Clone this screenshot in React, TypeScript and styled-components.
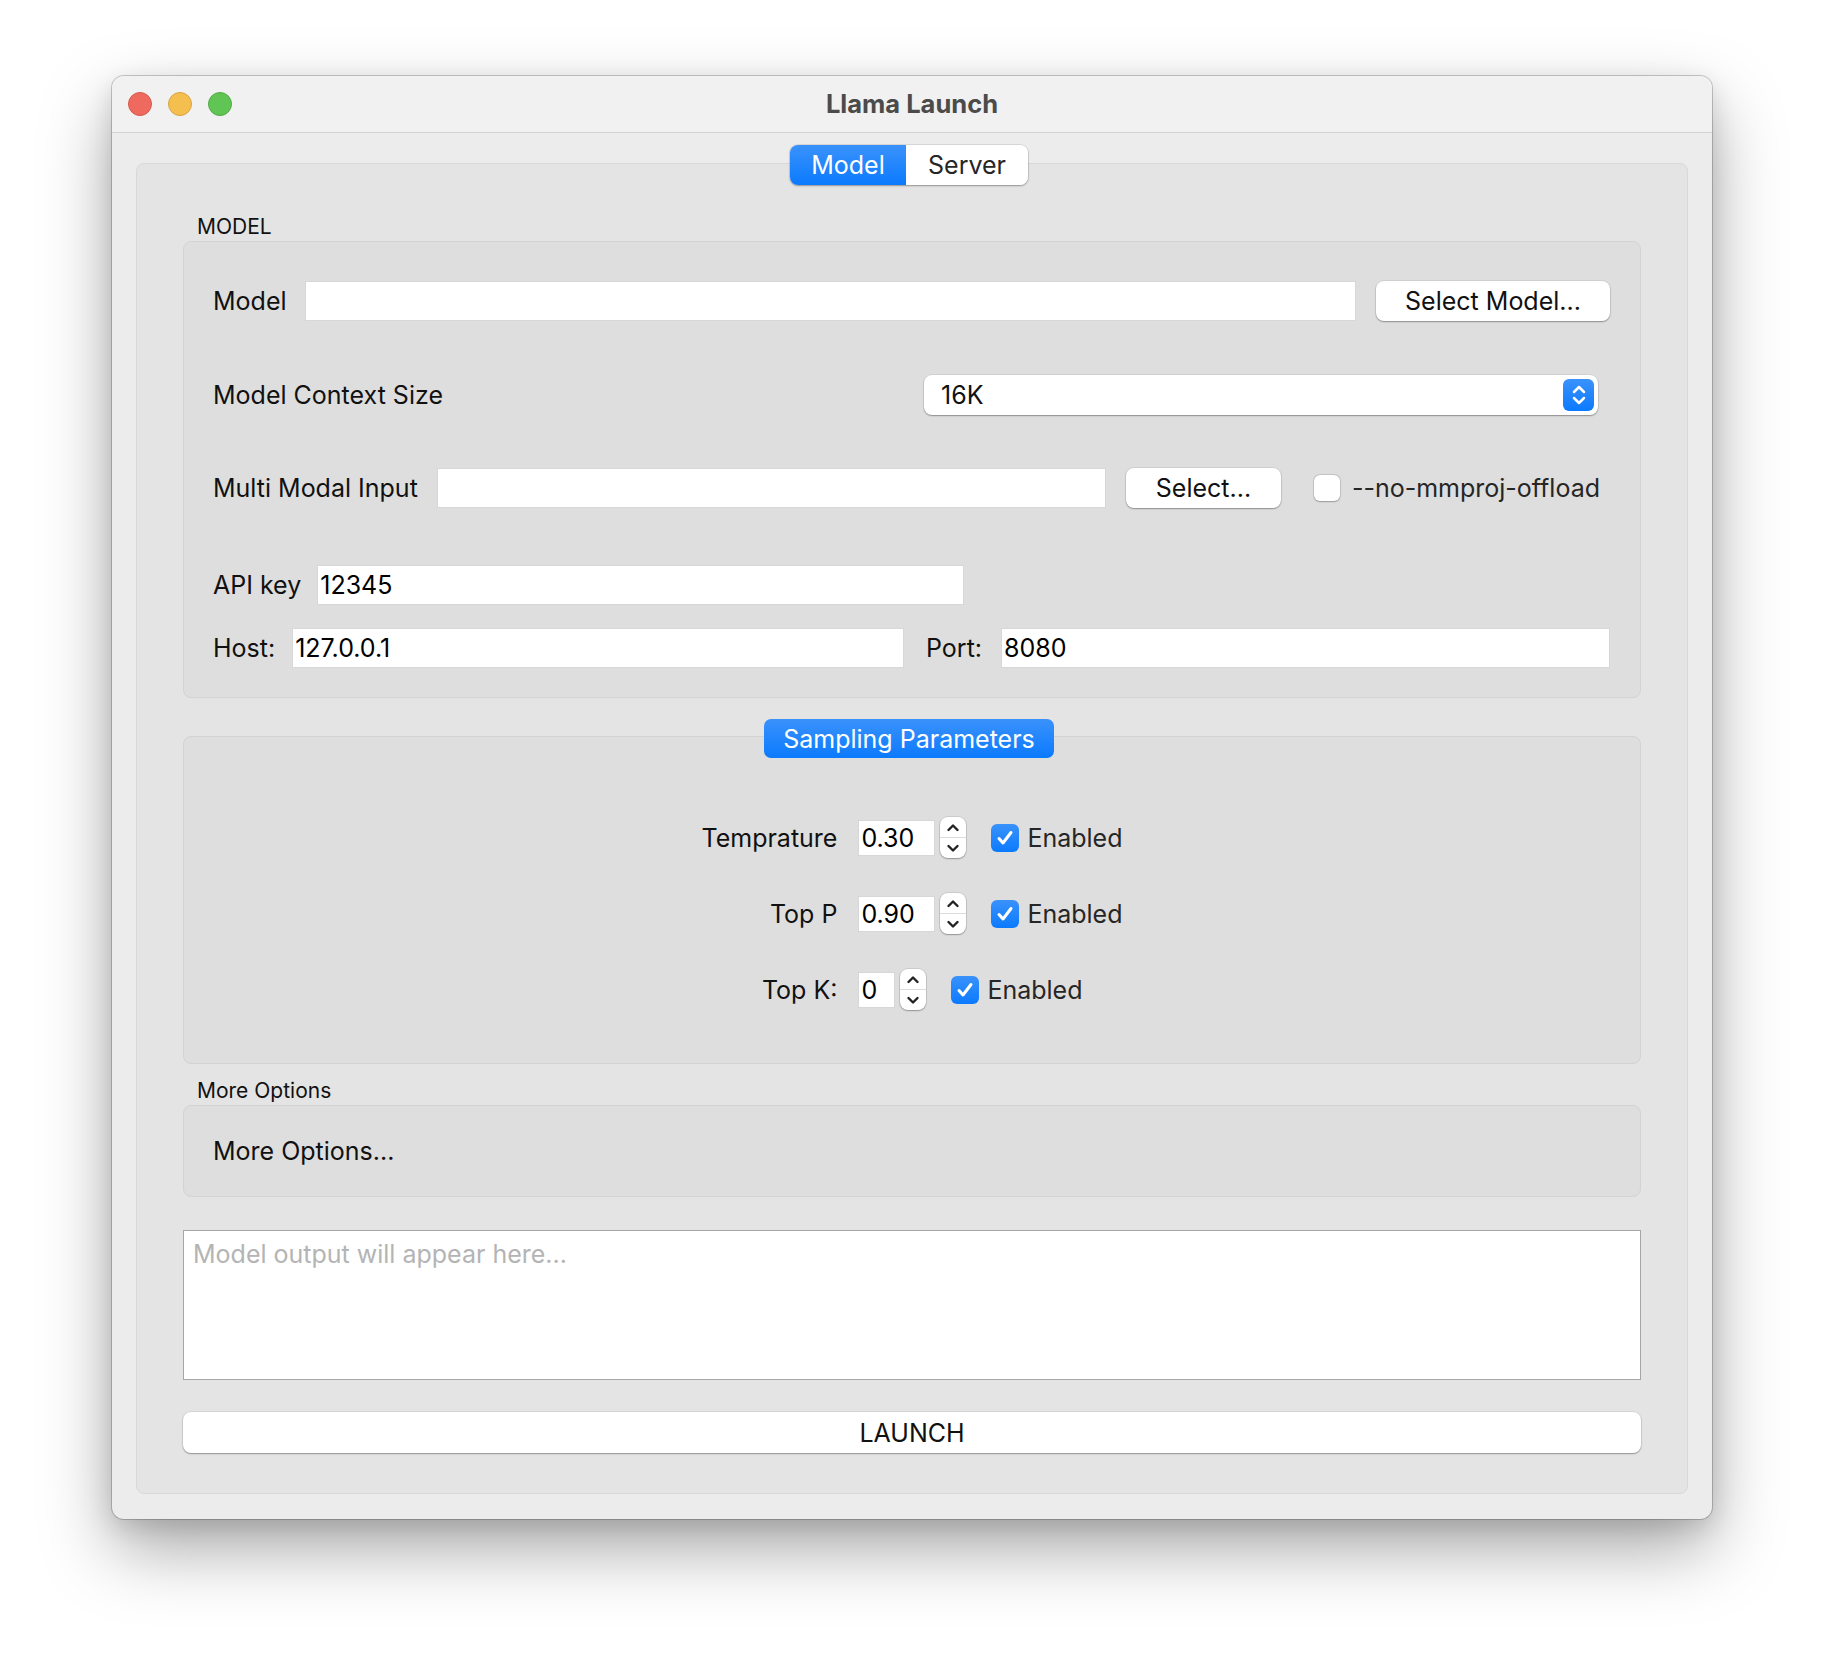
import * as React from "react";
import styled, { createGlobalStyle, css } from "styled-components";

const GlobalStyle = createGlobalStyle`
  html, body {
    margin: 0;
    padding: 0;
    background: #ffffff;
  }
  body {
    font-family: Inter, "Liberation Sans", sans-serif;
    color: #111;
    -webkit-font-smoothing: antialiased;
  }
  * {
    box-sizing: border-box;
  }
`;

const FONT = "25px";

const Page = styled.div`
  width: 1824px;
  height: 1668px;
  padding: 76px 0 0 112px;
`;

const Window = styled.div`
  width: 1600px;
  height: 1443px;
  display: flex;
  flex-direction: column;
  background: #ececec;
  border-radius: 12px;
  overflow: hidden;
  box-shadow: 0 0 0 1px rgba(0, 0, 0, 0.2), 0 30px 70px rgba(0, 0, 0, 0.34),
    0 8px 24px rgba(0, 0, 0, 0.12);
`;

const TitleBar = styled.div`
  height: 57px;
  flex-shrink: 0;
  display: grid;
  grid-template-columns: 1fr auto 1fr;
  align-items: center;
  padding: 0 16px;
  background: #f1f1f1;
  border-bottom: 1px solid #d2d2d2;
`;

const Lights = styled.div`
  display: flex;
  gap: 16px;
`;

const Light = styled.span<{ $fill: string; $edge: string }>`
  width: 24px;
  height: 24px;
  border-radius: 50%;
  background: ${(p) => p.$fill};
  border: 1px solid ${(p) => p.$edge};
`;

const Title = styled.div`
  font-size: 25.5px;
  font-weight: 700;
  color: #4b4b4b;
  margin-top: -2px;
`;

const Body = styled.div`
  flex: 1;
  display: flex;
  flex-direction: column;
  padding: 12px 24px 25px;
`;

const Segmented = styled.div`
  align-self: center;
  margin-right: 6px;
  display: flex;
  height: 40px;
  border-radius: 8px;
  overflow: hidden;
  position: relative;
  z-index: 1;
  box-shadow: 0 0 0 1px rgba(0, 0, 0, 0.08), 0 1px 2px rgba(0, 0, 0, 0.3);
`;

const Segment = styled.div<{ $active?: boolean; $w: number }>`
  width: ${(p) => p.$w}px;
  display: flex;
  align-items: center;
  justify-content: center;
  font-size: ${FONT};
  ${(p) =>
    p.$active
      ? css`
          background: linear-gradient(#3a92fb, #0b7afe);
          color: #fff;
        `
      : css`
          background: #fff;
          color: #262626;
        `}
`;

const Pane = styled.div`
  flex: 1;
  margin-top: -22px;
  display: flex;
  flex-direction: column;
  padding: 50px 46px 0;
  background: #e4e4e4;
  border: 1px solid #d8d8d8;
  border-radius: 8px;
`;

const SectionLabel = styled.div<{ $mt?: number }>`
  font-size: 21px;
  line-height: 26px;
  height: 26px;
  margin-top: ${(p) => p.$mt ?? 0}px;
  margin-left: 14px;
  color: #111;
`;

const Group = styled.div`
  margin-top: 1px;
  background: #dedede;
  border: 1px solid #d3d3d3;
  border-radius: 8px;
`;

const ModelGroup = styled(Group)`
  padding: 39px 30px 30px 29px;
`;

const Row = styled.div<{ $space?: number }>`
  display: flex;
  align-items: center;
  height: 40px;
  margin-top: ${(p) => p.$space ?? 0}px;
`;

const Label = styled.span<{ $gap?: number; $grow?: boolean }>`
  font-size: ${FONT};
  color: #111;
  white-space: nowrap;
  margin-right: ${(p) => p.$gap ?? 0}px;
  ${(p) => p.$grow && "flex: 1;"}
`;

const TextInput = styled.input<{ $w?: number }>`
  height: 40px;
  ${(p) => (p.$w ? `width: ${p.$w}px;` : "flex: 1; min-width: 0;")}
  border: none;
  background: #fff;
  box-shadow: inset 0 0 0 1px #d7d7d7, inset 0 -1px 0 #a9a9a9;
  font-family: inherit;
  font-size: ${FONT};
  color: #000;
  padding: 0 3px;
  outline: none;
`;

const Button = styled.div<{ $w: number; $ml?: number }>`
  width: ${(p) => p.$w}px;
  height: 40px;
  margin-left: ${(p) => p.$ml ?? 0}px;
  display: flex;
  align-items: center;
  justify-content: center;
  background: #fff;
  border-radius: 8px;
  box-shadow: 0 0 0 1px rgba(0, 0, 0, 0.06), 0 1px 1.5px rgba(0, 0, 0, 0.32);
  font-size: ${FONT};
  color: #111;
`;

const Combo = styled.div`
  width: 674px;
  height: 40px;
  margin-right: 12px;
  display: flex;
  align-items: center;
  justify-content: space-between;
  padding: 0 4px 0 17px;
  background: #fff;
  border-radius: 8px;
  box-shadow: 0 0 0 1px rgba(0, 0, 0, 0.06), 0 1px 1.5px rgba(0, 0, 0, 0.32);
  font-size: ${FONT};
  color: #111;
`;

const ComboArrows = styled.div`
  width: 31px;
  height: 32px;
  border-radius: 6px;
  background: linear-gradient(#3a92fb, #0b7afe);
  display: flex;
  align-items: center;
  justify-content: center;
`;

const Check = styled.div<{ $on?: boolean; $ml?: number }>`
  width: 28px;
  height: 28px;
  flex-shrink: 0;
  margin-left: ${(p) => p.$ml ?? 0}px;
  border-radius: 6px;
  display: flex;
  align-items: center;
  justify-content: center;
  ${(p) =>
    p.$on
      ? css`
          background: linear-gradient(#3a92fb, #0b7afe);
        `
      : css`
          width: 26px;
          height: 26px;
          background: #fff;
          box-shadow: 0 0 0 1px rgba(0, 0, 0, 0.08), 0 0.5px 1.5px rgba(0, 0, 0, 0.25);
        `}
`;

const CheckText = styled.span<{ $ml: number; $mr?: number }>`
  margin-left: ${(p) => p.$ml}px;
  margin-right: ${(p) => p.$mr ?? 0}px;
  font-size: ${FONT};
  color: #262626;
  white-space: nowrap;
`;

const HostRow = styled.div`
  display: grid;
  grid-template-columns: 691fr 684fr;
  column-gap: 22px;
  height: 39px;
  margin-top: 23px;
`;

const Pair = styled.div`
  display: flex;
  align-items: center;
`;

const SamplingWrap = styled.div`
  margin-top: 21px;
  display: flex;
  flex-direction: column;
`;

const Pill = styled.div`
  align-self: center;
  margin-right: 6px;
  position: relative;
  z-index: 1;
  width: 290px;
  height: 39px;
  border-radius: 7px;
  background: linear-gradient(#3a92fb, #0b7afe);
  color: #fff;
  font-size: ${FONT};
  display: flex;
  align-items: center;
  justify-content: center;
`;

const SamplingGroup = styled(Group)`
  margin-top: -22px;
  padding: 80px 0 53px;
`;

const ParamGrid = styled.div`
  display: grid;
  grid-template-columns: auto auto;
  column-gap: 21px;
  row-gap: 35px;
  justify-content: center;
  align-items: center;
`;

const ParamLabel = styled.span`
  justify-self: end;
  font-size: ${FONT};
  color: #111;
`;

const Field = styled.div`
  display: flex;
  align-items: center;
  height: 41px;
`;

const SpinInput = styled.input<{ $w: number }>`
  width: ${(p) => p.$w}px;
  height: 36px;
  border: none;
  background: #fff;
  box-shadow: inset 0 0 0 1px #d7d7d7, inset 0 -1px 0 #a9a9a9;
  font-family: inherit;
  font-size: ${FONT};
  color: #000;
  padding: 0 3px;
  outline: none;
`;

const Stepper = styled.div`
  width: 26px;
  height: 41px;
  margin-left: 5px;
  display: flex;
  flex-direction: column;
  background: #fff;
  border-radius: 8px;
  box-shadow: 0 0 0 1px rgba(0, 0, 0, 0.08), 0 1px 1.5px rgba(0, 0, 0, 0.28);
`;

const StepHalf = styled.div<{ $bottom?: boolean }>`
  flex: 1;
  display: flex;
  align-items: center;
  justify-content: center;
  ${(p) => p.$bottom && "border-top: 1px solid #dcdcdc;"}
`;

const MoreGroup = styled(Group)`
  height: 92px;
  display: flex;
  align-items: center;
  padding: 0 30px 0 29px;
`;

const Output = styled.textarea`
  margin-top: 33px;
  height: 150px;
  resize: none;
  border: 1px solid #a6a6a6;
  background: #fff;
  padding: 8px 9px;
  font-family: inherit;
  font-size: ${FONT};
  outline: none;
  &::placeholder {
    color: #b4b4b4;
  }
`;

const Launch = styled.div`
  margin-top: 32px;
  height: 41px;
  display: flex;
  align-items: center;
  justify-content: center;
  background: #fff;
  border-radius: 8px;
  box-shadow: 0 0 0 1px rgba(0, 0, 0, 0.06), 0 1px 1.5px rgba(0, 0, 0, 0.32);
  font-size: ${FONT};
  color: #111;
`;

const Chevron: React.FC<{ up?: boolean; color: string }> = ({ up, color }) => (
  <svg width="14" height="9" viewBox="0 0 14 9">
    <polyline
      points={up ? "2.5,7 7,2.5 11.5,7" : "2.5,2 7,6.5 11.5,2"}
      fill="none"
      stroke={color}
      strokeWidth={2.4}
      strokeLinecap="round"
      strokeLinejoin="round"
    />
  </svg>
);

const CheckMark = () => (
  <svg width="20" height="20" viewBox="0 0 20 20">
    <polyline
      points="4,10.5 8,15 16,4.5"
      fill="none"
      stroke="#fff"
      strokeWidth={3}
      strokeLinecap="round"
      strokeLinejoin="round"
    />
  </svg>
);

const Spin: React.FC<{ value: string; w: number }> = ({ value, w }) => (
  <>
    <SpinInput $w={w} defaultValue={value} />
    <Stepper>
      <StepHalf>
        <Chevron up color="#222" />
      </StepHalf>
      <StepHalf $bottom>
        <Chevron color="#222" />
      </StepHalf>
    </Stepper>
  </>
);

const params = [
  { label: "Temprature", value: "0.30", w: 77 },
  { label: "Top P", value: "0.90", w: 77 },
  { label: "Top K:", value: "0", w: 37 },
];

const App: React.FC = () => {
  return (
    <Page>
      <GlobalStyle />
      <Window>
        <TitleBar>
          <Lights>
            <Light $fill="#ee6a5f" $edge="#d8584d" />
            <Light $fill="#f5bf4f" $edge="#d9a440" />
            <Light $fill="#61c555" $edge="#4fab43" />
          </Lights>
          <Title>Llama Launch</Title>
          <span />
        </TitleBar>
        <Body>
          <Segmented>
            <Segment $active $w={116}>Model</Segment>
            <Segment $w={122}>Server</Segment>
          </Segmented>
          <Pane>
            <SectionLabel>MODEL</SectionLabel>
            <ModelGroup>
              <Row>
                <Label $gap={18}>Model</Label>
                <TextInput />
                <Button $w={234} $ml={20}>Select Model...</Button>
              </Row>
              <Row $space={54}>
                <Label $grow>Model Context Size</Label>
                <Combo>
                  <span>16K</span>
                  <ComboArrows>
                    <svg width="16" height="24" viewBox="0 0 16 24">
                      <polyline points="3,9 8,4 13,9" fill="none" stroke="#fff" strokeWidth={2.5} strokeLinecap="round" strokeLinejoin="round" />
                      <polyline points="3,15 8,20 13,15" fill="none" stroke="#fff" strokeWidth={2.5} strokeLinecap="round" strokeLinejoin="round" />
                    </svg>
                  </ComboArrows>
                </Combo>
              </Row>
              <Row $space={53}>
                <Label $gap={19}>Multi Modal Input</Label>
                <TextInput />
                <Button $w={155} $ml={20}>Select...</Button>
                <Check $ml={33} />
                <CheckText $ml={12} $mr={10}>--no-mmproj-offload</CheckText>
              </Row>
              <Row $space={57}>
                <Label $gap={16}>API key</Label>
                <TextInput $w={647} defaultValue="12345" />
              </Row>
              <HostRow>
                <Pair>
                  <Label $gap={17}>Host:</Label>
                  <TextInput defaultValue="127.0.0.1" />
                </Pair>
                <Pair>
                  <Label $gap={19}>Port:</Label>
                  <TextInput defaultValue="8080" />
                </Pair>
              </HostRow>
            </ModelGroup>

            <SamplingWrap>
              <Pill>Sampling Parameters</Pill>
              <SamplingGroup>
                <ParamGrid>
                  {params.map((p) => (
                    <React.Fragment key={p.label}>
                      <ParamLabel>{p.label}</ParamLabel>
                      <Field>
                        <Spin value={p.value} w={p.w} />
                        <Check $on $ml={25}>
                          <CheckMark />
                        </Check>
                        <CheckText $ml={8}>Enabled</CheckText>
                      </Field>
                    </React.Fragment>
                  ))}
                </ParamGrid>
              </SamplingGroup>
            </SamplingWrap>

            <SectionLabel $mt={14}>More Options</SectionLabel>
            <MoreGroup>
              <Label>More Options...</Label>
            </MoreGroup>

            <Output placeholder="Model output will appear here..." />
            <Launch>LAUNCH</Launch>
          </Pane>
        </Body>
      </Window>
    </Page>
  );
};

export default App;
